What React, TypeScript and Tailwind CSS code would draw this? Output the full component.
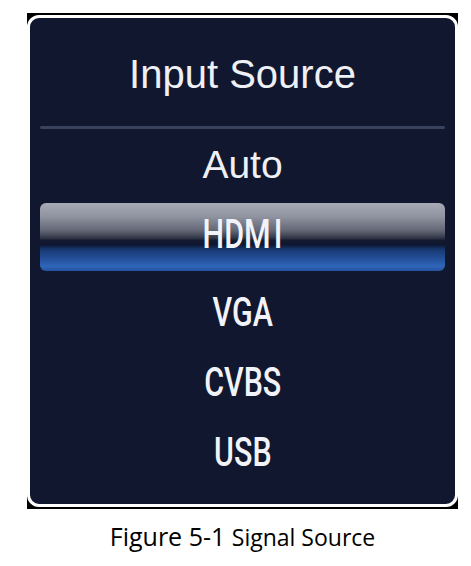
const sources = ['VGA', 'CVBS', 'USB'];

function CondensedLabel({ children }: { children: React.ReactNode }) {
  return (
    <div className="flex justify-center">
      <span className="inline-block scale-x-[0.76] font-['Roboto',sans-serif] text-[40px] font-medium leading-[47px] text-[#f1f3f8]">
        {children}
      </span>
    </div>
  );
}

export default function App() {
  return (
    <div className="min-h-[566px] w-[471px] bg-white">
      <div className="ml-[27px] pt-[13px] w-[431px]">
        {/* menu frame */}
        <div className="bg-black pt-[2px] pb-[2px]">
          <div className="h-[492px] rounded-[12px] border-[3px] border-white bg-[#11172e] pt-[33px]">
            <div className="text-center font-['Liberation_Sans',Arial,sans-serif] text-[40px] leading-[46px] text-[#eef0f5]">
              Input Source
            </div>
            <div className="mx-[10px] mt-[29px] h-[3px] rounded-full bg-[#3a435e]" />

            <div className="mt-[13px] text-center font-['Liberation_Sans',Arial,sans-serif] text-[39px] leading-[45px] text-[#eef0f5]">
              Auto
            </div>

            {/* selected item */}
            <div className="mx-[10px] mt-[16px] h-[68px] rounded-[6px] bg-[linear-gradient(to_bottom,#a8abb6_0%,#9093a0_20%,#646877_40%,#343949_51%,#141b30_55%,#0f1630_61%,#183a74_69%,#2755a3_85%,#3066ba_93%,#2552a0_100%)] pt-[8px]">
              <CondensedLabel>
                HDM<span className="ml-[4px]">I</span>
              </CondensedLabel>
            </div>

            <div className="mt-[18px] flex flex-col gap-[23px]">
              {sources.map((s) => (
                <CondensedLabel key={s}>{s}</CondensedLabel>
              ))}
            </div>
          </div>
        </div>

        <div className="mt-[10px] text-center font-['Open_Sans',sans-serif] leading-[34px] text-black">
          <span className="text-[25px]">Figure 5-1 </span>
          <span className="text-[23px]">Signal Source</span>
        </div>
      </div>
    </div>
  );
}
